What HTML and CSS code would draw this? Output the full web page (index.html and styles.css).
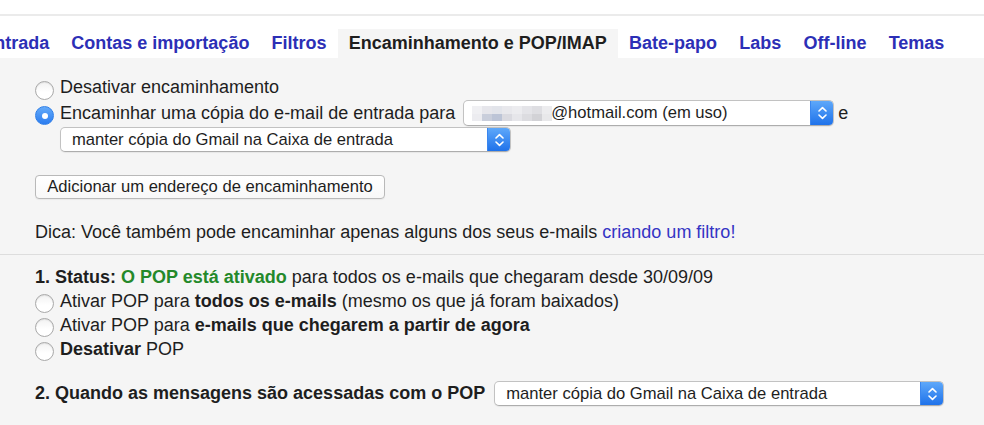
FILE: index.html
```html
<!DOCTYPE html>
<html lang="pt-BR">
<head>
<meta charset="utf-8">
<title>Configurações - Encaminhamento e POP/IMAP</title>
<link rel="stylesheet" href="styles.css">
</head>
<body>
<div class="top"></div>
<div class="tabbar">
  <nav class="tabs">
    <span class="tab">Caixa de entrada</span>
    <span class="tab">Contas e importação</span>
    <span class="tab">Filtros</span>
    <span class="tab active">Encaminhamento e POP/IMAP</span>
    <span class="tab">Bate-papo</span>
    <span class="tab">Labs</span>
    <span class="tab">Off-line</span>
    <span class="tab">Temas</span>
  </nav>
</div>
<main class="content">
  <section class="fwd">
    <div class="row r1">
      <span class="radio"></span>
      <span>Desativar encaminhamento</span>
    </div>
    <div class="row r2">
      <span class="radio on"></span>
      <span>Encaminhar uma cópia do e-mail de entrada para</span>
      <div class="select s1">
        <span class="sel-text"><span class="blur"><i></i><i></i><i></i><i></i><i></i><i></i><i></i><i></i><i></i><i></i><i></i><i></i><i></i><i></i><i></i><i></i></span>@hotmail.com (em uso)</span>
        <span class="arrow"><svg width="9" height="14" viewBox="0 0 9 14"><path d="M1 5 L4.5 1.6 L8 5 M1 9 L4.5 12.4 L8 9" fill="none" stroke="#fff" stroke-width="1.6" stroke-linecap="round" stroke-linejoin="round"/></svg></span>
      </div>
      <span class="and">e</span>
    </div>
    <div class="row r3">
      <div class="select s2">
        <span class="sel-text">manter cópia do Gmail na Caixa de entrada</span>
        <span class="arrow"><svg width="9" height="14" viewBox="0 0 9 14"><path d="M1 5 L4.5 1.6 L8 5 M1 9 L4.5 12.4 L8 9" fill="none" stroke="#fff" stroke-width="1.6" stroke-linecap="round" stroke-linejoin="round"/></svg></span>
      </div>
    </div>
    <button class="btn" type="button">Adicionar um endereço de encaminhamento</button>
    <p class="tip">Dica: Você também pode encaminhar apenas alguns dos seus e-mails <a class="link" href="#">criando um filtro!</a></p>
  </section>
  <section class="pop">
    <div class="line"><b>1. Status:</b> <b class="green">O POP está ativado</b> para todos os e-mails que chegaram desde 30/09/09</div>
    <div class="line opt"><span class="radio"></span><span>Ativar POP para <b>todos os e-mails</b> (mesmo os que já foram baixados)</span></div>
    <div class="line opt"><span class="radio"></span><span>Ativar POP para <b>e-mails que chegarem a partir de agora</b></span></div>
    <div class="line opt"><span class="radio"></span><span><b>Desativar</b> POP</span></div>
    <div class="row when">
      <b>2. Quando as mensagens são acessadas com o POP</b>
      <div class="select s3">
        <span class="sel-text">manter cópia do Gmail na Caixa de entrada</span>
        <span class="arrow"><svg width="9" height="14" viewBox="0 0 9 14"><path d="M1 5 L4.5 1.6 L8 5 M1 9 L4.5 12.4 L8 9" fill="none" stroke="#fff" stroke-width="1.6" stroke-linecap="round" stroke-linejoin="round"/></svg></span>
      </div>
    </div>
  </section>
</main>
</body>
</html>
```
FILE: styles.css
```css
* { box-sizing: border-box; }
html, body { margin: 0; padding: 0; }
body {
  background: #f5f5f5;
  font-family: "Liberation Sans", Arial, sans-serif;
  font-size: 18px;
  color: #1e1e1e;
  width: 984px;
  height: 425px;
  overflow: hidden;
}
.top {
  height: 16px;
  background: #fff;
  border-bottom: 2px solid #ebebeb;
}
.tabbar {
  background: #fff;
  height: 42px;
  overflow: hidden;
  display: flex;
  align-items: flex-end;
}
.tabs {
  display: flex;
  margin-left: -106px;
  white-space: nowrap;
}
.tab {
  font-weight: bold;
  font-size: 18px;
  color: #2c2fb6;
  height: 29px;
  line-height: 29px;
  padding: 0 11.1px;
}
.tab.active {
  background: #f5f5f5;
  color: #1e1e1e;
}
.content { display: block; }
.fwd {
  padding: 18px 0 0 35px;
}
.row {
  display: flex;
  align-items: center;
  white-space: nowrap;
}
.r1 { height: 23px; }
.r2 { height: 26px; margin-top: 1px; }
.r3 { height: 25px; margin-top: 1px; padding-left: 25px; }
.radio {
  width: 19px;
  height: 19px;
  border-radius: 50%;
  border: 1px solid #a9a9a9;
  background: linear-gradient(#f2f2f2, #ffffff 60%);
  box-shadow: inset 0 1px 1px rgba(0,0,0,0.08);
  margin: 5px 6px 0 0;
  flex: none;
  display: flex;
  align-items: center;
  justify-content: center;
}
.radio.on {
  border-color: #2f7fe8;
  background: linear-gradient(#63aaf9, #2b7cf0);
  box-shadow: none;
}
.radio.on::after {
  content: "";
  width: 6px;
  height: 6px;
  border-radius: 50%;
  background: #fff;
}
.select {
  display: flex;
  align-items: stretch;
  background: #fff;
  border: 1px solid #c2c2c2;
  border-bottom-color: #adadad;
  border-radius: 5px;
  box-shadow: 0 1px 1px rgba(0,0,0,0.06);
  font-size: 16.6px;
  color: #1e1e1e;
  overflow: hidden;
}
.sel-text {
  flex: 1;
  display: flex;
  align-items: center;
  padding-left: 11px;
}
.arrow {
  width: 23px;
  flex: none;
  background: linear-gradient(#5ea8fa, #1f72ea);
  display: flex;
  align-items: center;
  justify-content: center;
  border-left: 1px solid #3a86ef;
}
.s1 { width: 371px; height: 26px; margin-left: 8px; }
.s1 .sel-text { padding-left: 8px; }
.s2 { width: 451px; height: 25px; }
.s3 { width: 450px; height: 25px; margin-left: 9px; }
.and { margin-left: 4px; }
.blur {
  display: grid;
  grid-template-columns: repeat(8, 10px);
  grid-template-rows: 8px 7px;
  margin-right: -1px;
}
.blur i { display: block; }
.blur i:nth-child(1) { background: #f0f0f3; }
.blur i:nth-child(2) { background: #e6e6eb; }
.blur i:nth-child(3) { background: #e2e4ea; }
.blur i:nth-child(4) { background: #e8e8ec; }
.blur i:nth-child(5) { background: #ececef; }
.blur i:nth-child(6) { background: #e4e4e8; }
.blur i:nth-child(7) { background: #dedee2; }
.blur i:nth-child(8) { background: #ececee; }
.blur i:nth-child(9) { background: #ececf0; }
.blur i:nth-child(10) { background: #c9cedb; }
.blur i:nth-child(11) { background: #bcc4d6; }
.blur i:nth-child(12) { background: #dadae0; }
.blur i:nth-child(13) { background: #e6e6ea; }
.blur i:nth-child(14) { background: #dcdce0; }
.blur i:nth-child(15) { background: #d2d2d6; }
.blur i:nth-child(16) { background: #e8e8ea; }
.btn {
  display: block;
  margin: 23px 0 0 0;
  width: 350px;
  height: 24px;
  padding: 0;
  font-family: "Liberation Sans", Arial, sans-serif;
  font-size: 16.6px;
  color: #1e1e1e;
  background: linear-gradient(#ffffff, #f8f8f8);
  border: 1px solid #b9b9b9;
  border-radius: 4px;
  box-shadow: 0 1px 1px rgba(0,0,0,0.05);
}
.tip {
  margin: 22px 0 0 0;
  line-height: 22px;
  white-space: nowrap;
}
.link {
  color: #3434c4;
  text-decoration: none;
}
.pop {
  margin-top: 11px;
  border-top: 1px solid #dddddd;
  padding: 10px 0 0 35px;
}
.line {
  height: 24px;
  line-height: 24px;
  white-space: nowrap;
}
.line.opt {
  display: flex;
  align-items: center;
}
.line.opt .radio { margin-top: 5px; }
.green { color: #24892a; }
.when {
  height: 25px;
  margin-top: 20px;
}
```
